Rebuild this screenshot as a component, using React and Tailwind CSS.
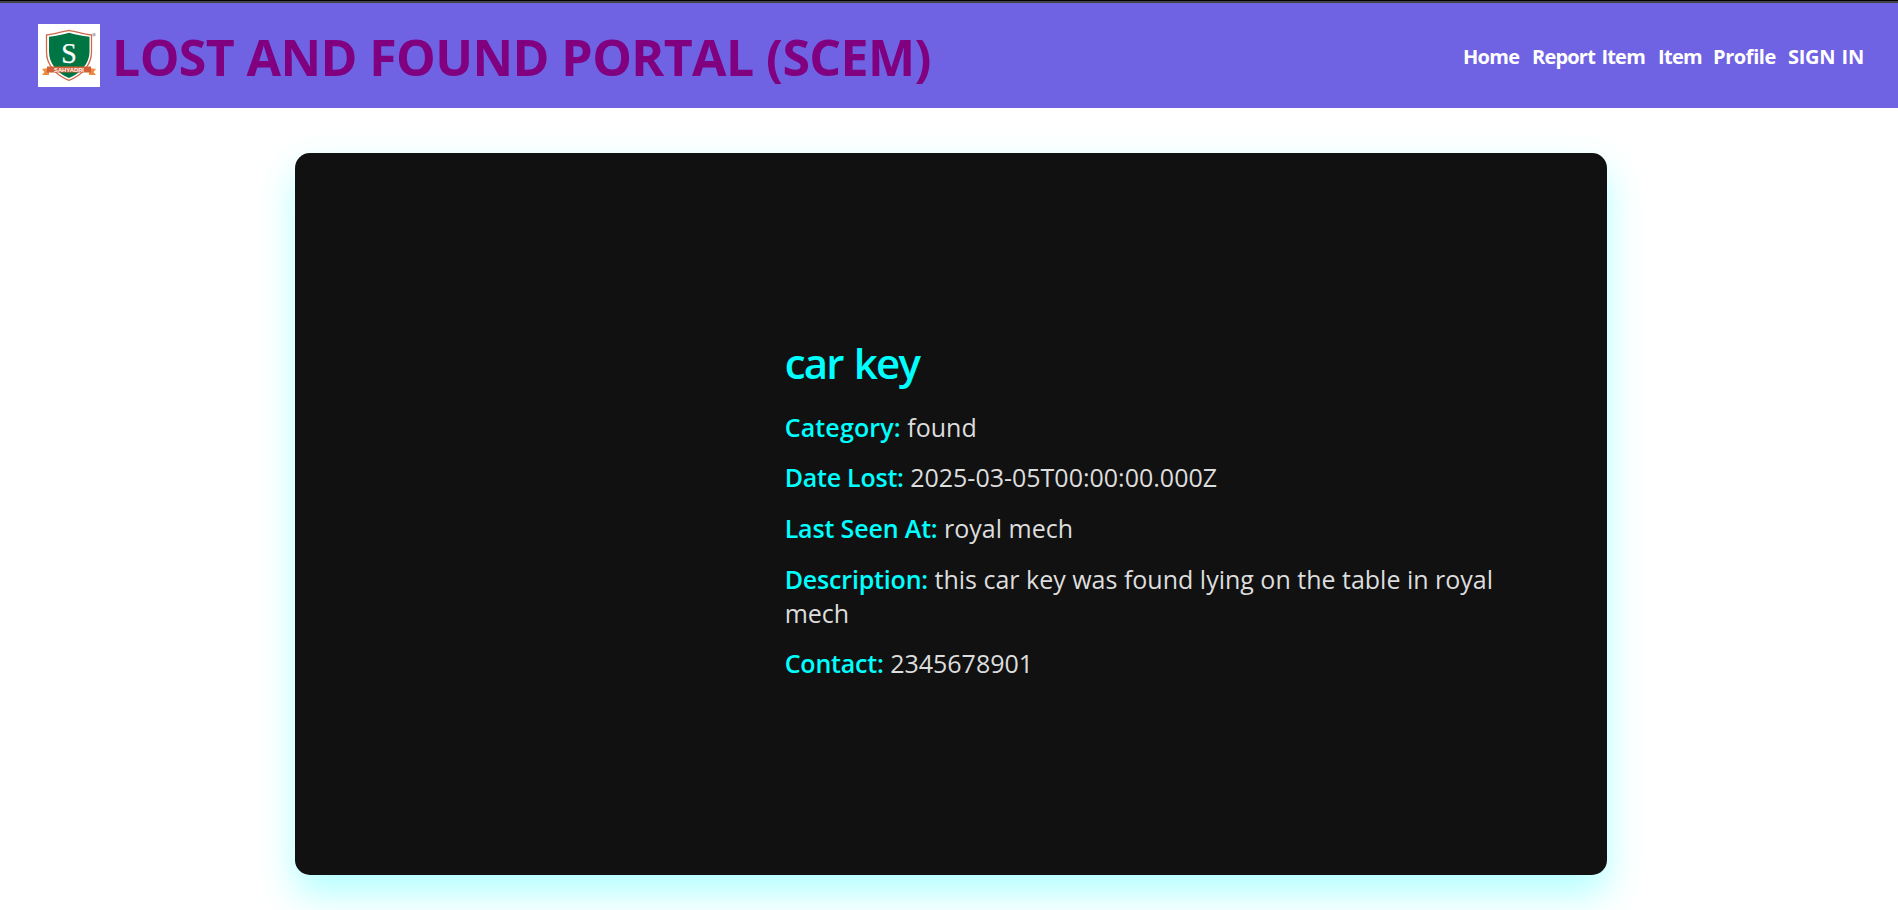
import React from "react";

const links = [
  { label: "Home", cls: "w-[56px] tracking-[-0.7px]" },
  { label: "Report Item", cls: "w-[113px] tracking-[-0.8px] [word-spacing:2px]" },
  { label: "Item", cls: "w-[42px] tracking-[-0.7px]" },
  { label: "Profile", cls: "w-[62px] tracking-[-0.4px]" },
  { label: "SIGN IN", cls: "w-[76px] tracking-[-0.3px] [word-spacing:1.5px]" },
];

const details = [
  { label: "Category:", value: "found", cls: "tracking-[0.15px]" },
  { label: "Date Lost:", value: "2025-03-05T00:00:00.000Z", cls: "tracking-[-0.24px]" },
  { label: "Last Seen At:", value: "royal mech", cls: "tracking-[-0.15px]" },
  { label: "Description:", value: "this car key was found lying on the table in royal mech", cls: "tracking-[-0.18px]" },
  { label: "Contact:", value: "2345678901", cls: "tracking-[-0.2px]" },
];

function Logo() {
  return (
    <svg className="h-[63px] w-[62px] shrink-0 bg-white" viewBox="0 0 62 63">
      <path d="M8.5 11C17 10 24 8 31 6.3C38 8 45 10 53.5 11V28C53.5 40 45 51 31 56.3C17 51 8.5 40 8.5 28Z" fill="#fff" stroke="#cf6a48" strokeWidth="1.3" />
      <path d="M11 12.8C19 12 25 10.3 31 8.8C37 10.3 43 12 51.5 12.8V28C51.5 39 43 49 31 54C19 49 11 39 11 28Z" fill="#007544" />
      <path d="M4 45L11 44V51L4 51L6.5 48ZM58 45L51 44V51L58 51L55.5 48Z" fill="#ee8a3c" />
      <path d="M9 42.5H53V48.5H9Z" fill="#cf6038" />
      <text x="31" y="38.5" textAnchor="middle" fontFamily="Liberation Serif, serif" fontSize="30" textLength="15.5" lengthAdjust="spacingAndGlyphs" fill="#fff" stroke="#fff" strokeWidth=".25">S</text>
      <text x="31" y="47.5" textAnchor="middle" fontFamily="Liberation Sans, sans-serif" fontSize="5.5" fontWeight="700" textLength="30" lengthAdjust="spacingAndGlyphs" fill="#fff">SAHYADRI</text>
      <circle cx="56" cy="10.7" r="1.4" fill="#bbb" stroke="#999" strokeWidth=".5" />
    </svg>
  );
}

export default function App() {
  return (
    <div className="h-[910px] overflow-hidden bg-white font-['Open_Sans','Noto_Sans',sans-serif]">
      <div className="h-px bg-black" />
      <div className="h-[2px] bg-[#444]" />
      <header className="flex h-[105px] items-start bg-[#6f63e4] pl-[38px] pr-[34px] pt-[21px]">
        <Logo />
        <h1 className="ml-[12px] mt-[-1px] whitespace-nowrap text-[50px] font-bold leading-[68px] tracking-[-0.6px] text-[#800080]">
          LOST AND FOUND PORTAL (SCEM)
        </h1>
        <nav className="ml-auto mt-[19px] flex gap-[13px] text-[20px] font-bold leading-[27px] text-white">
          {links.map((l) => (
            <a key={l.label} className={"whitespace-nowrap " + l.cls}>{l.label}</a>
          ))}
        </nav>
      </header>
      <main className="ml-[294.7px] mt-[44.7px] flex h-[722.4px] w-[1312.6px] items-center rounded-[15px] bg-[#111] pb-[14px] pl-[490px] shadow-[0_18.75px_37.5px_rgba(0,255,255,0.3)]">
        <section className="w-[760px]">
          <h2 className="text-[42px] font-semibold leading-[58px] tracking-[-1.8px] text-[#0ff] [word-spacing:2px]">car key</h2>
          <div className="mt-[18px] flex flex-col gap-[16.7px] text-[25px] leading-[34px] text-[#ddd]">
            {details.map((d) => (
              <p key={d.label}>
                <strong className={"font-semibold text-[#0ff] " + d.cls}>{d.label}</strong> {d.value}
              </p>
            ))}
          </div>
        </section>
      </main>
    </div>
  );
}
